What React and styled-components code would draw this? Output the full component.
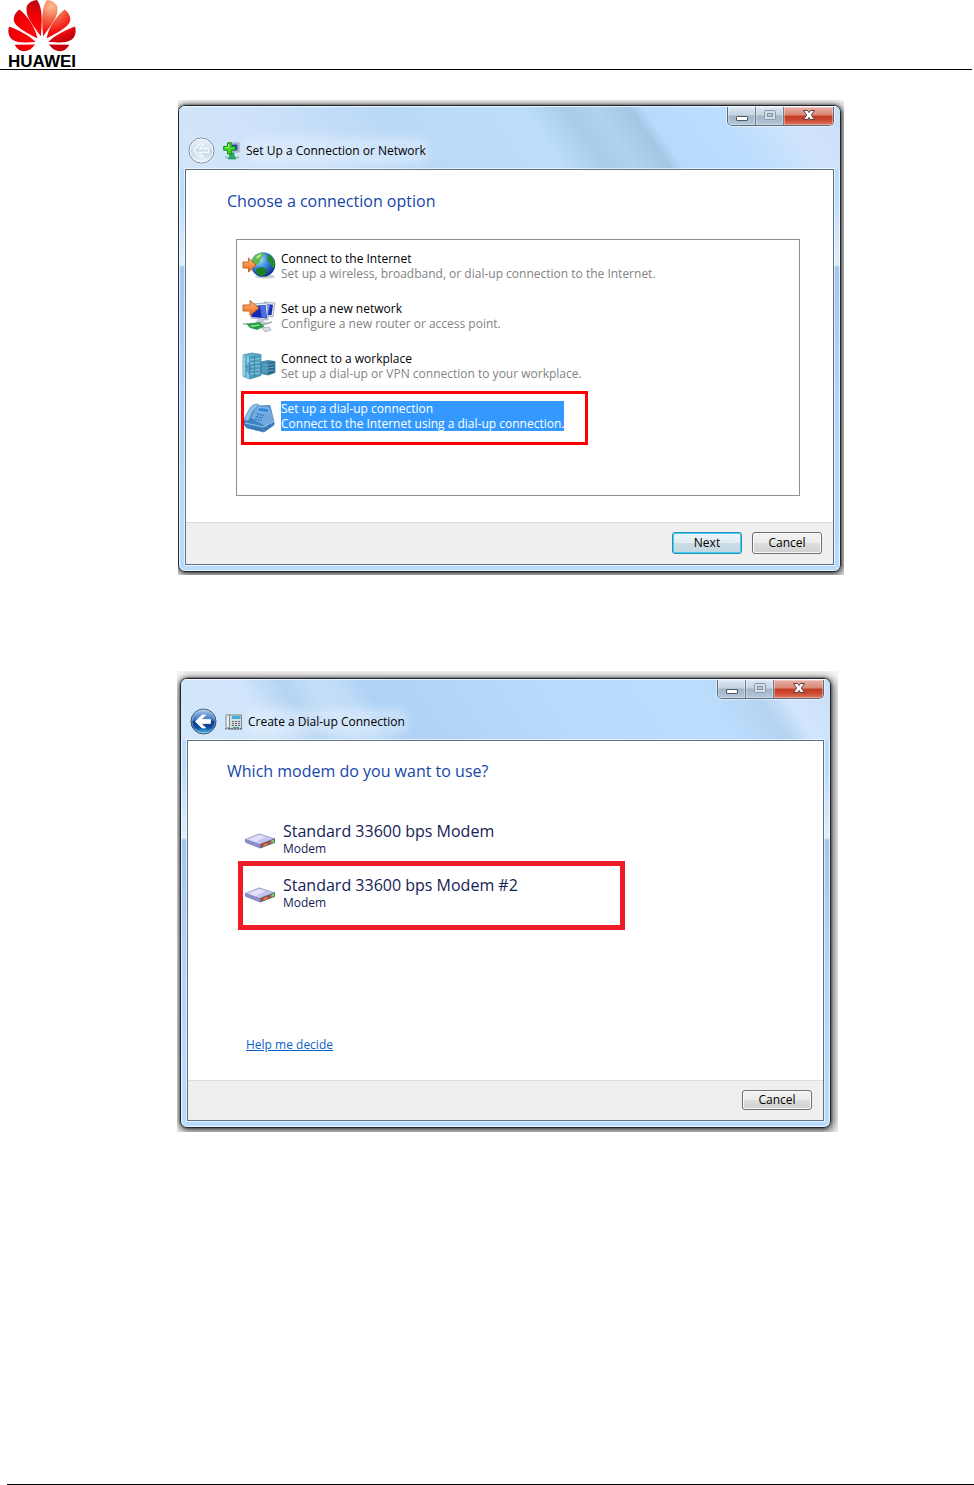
import React from 'react';
import styled, { createGlobalStyle, css } from 'styled-components';

const GlobalStyle = createGlobalStyle`
  * {
    box-sizing: border-box;
  }

  body {
    margin: 0;
    background: #fff;
    font-family: 'Open Sans', 'Noto Sans', sans-serif;
    font-size: 12px;
    color: #000;
  }

  button {
    font: inherit;
    color: inherit;
    padding: 0;
  }

  h1, h2, ul {
    margin: 0;
    padding: 0;
    font-weight: 400;
    list-style: none;
  }

  svg {
    display: block;
    flex: none;
  }
`

const Page = styled.div`
  min-height: 100vh;
  display: flex;
  flex-direction: column;
`

const PageHeader = styled.header`
  height: 70px;
  margin-right: 2px;
  padding-left: 8px;
  border-bottom: 1px solid #000;
`

const Brand = styled.div`
  width: 68px;
  font: bold 17px/16px 'Liberation Sans', sans-serif;
  text-align: center;

  span {
    display: block;
    padding-top: 2px;
  }
`

const Content = styled.main`
  flex: 1;
  display: flex;
  flex-direction: column;
  gap: 96px;
  padding: 30px 16px 40px 177px;
`

const PageFooter = styled.footer`
  margin-left: 7px;
  border-top: 1px solid #000;
`

// soft grey backdrop that the window shadow is clipped to
const Stage = styled.section`
  overflow: hidden;
  background: #f4f4f4;
  width: 100%;

  ${p => p.$kind === 'network' ? css`
    max-width: 666px;
    margin-left: 1px;
    padding: 5px 3px 3px 0;
  ` : css`
    max-width: 661px;
    padding: 7px 7px 4px 3px;
  `}
`

const Frame = styled.div`
  border: 1px solid #20262e;
  border-radius: 7px;
  overflow: hidden;
  background: linear-gradient(180deg, #c4def8 0, #bcdcfb 90px, #dfeefc 159px, #a3c8ec 161px, #b4d6f8 300px, #b9dcfd 100%);
  box-shadow: inset 0 0 0 1px rgba(255, 255, 255, .7), 0 0 3px rgba(0, 0, 0, .7), 1px 2px 8px 2px rgba(0, 0, 0, .6);
`

const glass = {
  network: 'linear-gradient(56deg, #d2e5fa 0, #cde2f9 16%, #bad9f7 34%, #bcddfc 55%, #a9ccea 61%, #b1d3f1 65%, #a4c7e6 70%, #b9dbfb 72%, #bddefe 83%, #d0e4fb 92%, #c8dff7 100%)',
  dialup: 'linear-gradient(56deg, #d4e7fb 0, #d0e5fb 14%, #b5d4f3 20%, #c4dff8 25%, #c0dcf7 28%, #afd2f5 32%, #b4d7f8 46%, #b9dcfc 60%, #bcdefe 80%, #b4d3f1 88%, #d2e6fd 92%, #c8dff6 100%)'
}

const TitleBar = styled.header`
  display: flex;
  align-items: flex-start;
  justify-content: space-between;
  height: ${p => p.$kind === 'network' ? 63 : 61}px;
  padding: 0 6px 0 9px;
  background: ${p => glass[p.$kind]};
  border-top: 1px solid rgba(255, 255, 255, .7);
`

const TitleGroup = styled.div`
  display: flex;
  align-items: center;
  padding-top: ${p => p.$kind === 'network' ? 30 : 28}px;

  h1 {
    margin-left: 6px;
    font-size: 12px;
    line-height: 20px;
    border-radius: 10px;
    background: rgba(240, 247, 255, .35);
    box-shadow: 0 0 8px 4px rgba(240, 247, 255, .35);
  }
`

const BackButton = styled.button`
  border: 0;
  background: none;
  border-radius: 50%;
  margin-right: 8px;
`

const Captions = styled.div`
  display: flex;
  border: 1px solid #5d6b7b;
  border-top: 0;
  border-radius: 0 0 5px 5px;
  overflow: hidden;
  box-shadow: 0 0 0 1px rgba(255, 255, 255, .5);
`

const CaptionButton = styled.button`
  display: flex;
  align-items: center;
  justify-content: center;
  width: ${p => p.$close ? 49 : 28}px;
  height: 18px;
  border: 0;
  border-right: ${p => p.$close ? 0 : '1px solid #6e7c8c'};
  background: ${p => p.$close
    ? 'linear-gradient(180deg, #e9b1a7 0, #d98573 45%, #c23a22 50%, #cf4a33 75%, #dc7a62 100%)'
    : 'linear-gradient(180deg, #dbe6f1 0, #c5d3e1 45%, #a2b4c8 50%, #b4c6d9 100%)'};
  box-shadow: inset 0 0 0 1px rgba(255, 255, 255, .35);
`

const Client = styled.div`
  margin: 0 6px 6px;
  border: 1px solid #5f7186;
  background: #fff;
  box-shadow: 0 0 0 1px rgba(255, 255, 255, .6);
`

const Body = styled.div`
  height: ${p => p.$kind === 'network' ? 352 : 339}px;
  padding: ${p => p.$kind === 'network' ? '19px 33px 0 41px' : '18px 33px 0 39px'};
`

const Heading = styled.h2`
  font-size: 16px;
  line-height: 24px;
  color: #1646a8;
`

const OptionList = styled.ul`
  height: 257px;
  margin: 26px 0 0 9px;
  padding: 1px 0 0 5px;
  border: 1px solid #8a919b;
`

const Option = styled.li`
  position: relative;
  height: 50px;
`

const OptionButton = styled.button`
  display: flex;
  align-items: center;
  gap: 5px;
  width: 100%;
  height: 100%;
  border: 0;
  background: none;
  text-align: left;
`

const OptionText = styled.span`
  display: block;
  line-height: 15px;
  color: ${p => p.$selected ? '#fff' : '#000'};
  background: ${p => p.$selected ? '#3399ff' : 'none'};

  small {
    display: block;
    font-size: 12px;
    color: ${p => p.$selected ? '#fff' : '#838383'};
  }
`

const Callout = styled.span`
  position: absolute;
  pointer-events: none;

  ${p => p.$kind === 'network' ? css`
    top: 0;
    left: -1px;
    width: 347px;
    height: 54px;
    border: 3px solid #fe0000;
  ` : css`
    top: -7px;
    left: -7px;
    width: 387px;
    height: 69px;
    border: 5px solid #ee1c25;
  `}
`

const ModemList = styled.ul`
  margin: 31px 0 0 18px;
`

const Modem = styled.li`
  position: relative;
  height: 54px;
`

const ModemButton = styled(OptionButton)`
  gap: 8px;
  color: #151c55;
`

const ModemText = styled.span`
  display: block;
  padding-bottom: 4px;
  font-size: 16px;
  line-height: 20px;

  small {
    display: block;
    font-size: 12px;
    line-height: 16px;
  }
`

const HelpLink = styled.a`
  display: inline-block;
  margin: 114px 0 0 19px;
  line-height: 18px;
  color: #0a5fc4;
`

const Actions = styled.footer`
  display: flex;
  justify-content: flex-end;
  gap: 10px;
  height: ${p => p.$kind === 'network' ? 42 : 40}px;
  padding: 9px 11px 0;
  background: #efefef;
  border-top: 1px solid #dcdcdc;
`

const PushButton = styled.button`
  width: 70px;
  height: ${p => p.$short ? 20 : 22}px;
  border: 1px solid ${p => p.$primary ? '#2c8fb5' : '#707070'};
  border-radius: 3px;
  line-height: 18px;
  background: ${p => p.$primary
    ? 'linear-gradient(180deg, #eef5f9 0, #e1edf3 48%, #cbdde6 52%, #c3d8e3 100%)'
    : 'linear-gradient(180deg, #f3f3f3 0, #ebebeb 48%, #dddddd 52%, #d0d0d0 100%)'};
  box-shadow: inset 0 0 0 1px ${p => p.$primary ? '#42cdf5' : '#fafafa'};
`

const Petals = () =>
  <g>
    <path d="M97 107C78 78 50 50 55 20C60 7 74 1 86 0C103 25 101 62 97 107Z" />
    <path d="M87 113C60 98 14 78 17 54C19 41 26 33 34 28C56 46 79 76 87 113Z" />
    <path d="M82 124C58 125 17 129 5 108C0 98 0 88 3 78C28 87 64 105 82 124Z" />
    <path d="M80 131L20 132C26 145 38 152 48 151C62 150 72 142 80 131Z" />
  </g>

const HuaweiMark = () =>
  <svg width="68" height="52" viewBox="0 0 201 153" aria-hidden="true">
    <defs>
      <radialGradient id="petalLeft" gradientUnits="userSpaceOnUse" cx="70" cy="95" r="95">
        <stop offset="0" stopColor="#ff0a0a" />
        <stop offset=".55" stopColor="#f00005" />
        <stop offset="1" stopColor="#b40a12" />
      </radialGradient>
      <radialGradient id="petalRight" gradientUnits="userSpaceOnUse" cx="73" cy="18" r="110">
        <stop offset="0" stopColor="#fbc193" />
        <stop offset=".35" stopColor="#f4664a" />
        <stop offset=".7" stopColor="#f5100f" />
        <stop offset="1" stopColor="#c8000a" />
      </radialGradient>
    </defs>
    <g fill="url(#petalLeft)"><Petals /></g>
    <g fill="url(#petalRight)" transform="translate(201) scale(-1 1)"><Petals /></g>
  </svg>

const BackIcon = ({ active }) =>
  <svg width="27" height="27" viewBox="0 0 27 27" aria-hidden="true">
    <defs>
      <linearGradient id={active ? 'orbOn' : 'orbOff'} x1="0" y1="0" x2="0" y2="1">
        <stop offset="0" stopColor={active ? '#a9c8ea' : '#e6f0fa'} />
        <stop offset=".45" stopColor={active ? '#3a74be' : '#d3e1ee'} />
        <stop offset=".5" stopColor={active ? '#0b3d8e' : '#c6d7e7'} />
        <stop offset=".75" stopColor={active ? '#10519f' : '#d4e3f1'} />
        <stop offset="1" stopColor={active ? '#4fd0f5' : '#f1f7fd'} />
      </linearGradient>
    </defs>
    <circle cx="13.5" cy="13.5" r="12.5" fill={`url(#${active ? 'orbOn' : 'orbOff'})`} stroke={active ? '#3c506e' : '#7d8b9a'} />
    <circle cx="13.5" cy="13.5" r="11.5" fill="none" stroke="#fff" strokeOpacity={active ? .35 : .8} />
    <path
      d="M5.5 13.5L12 7h3.6l-4.4 4.6h9.3v3.8h-9.3l4.4 4.6H12Z"
      fill={active ? '#fff' : '#cfdeec'}
      stroke={active ? '#fff' : '#f8fbfe'}
      strokeWidth={active ? .8 : 1.2}
      strokeLinejoin="round"
    />
  </svg>

const NetworkAddIcon = () =>
  <svg width="17" height="18" viewBox="0 0 17 18" aria-hidden="true">
    <path d="M7 1h9v9H8z" fill="#c6cddd" stroke="#808ba5" strokeWidth=".8" />
    <path d="M9 2.500h5.500v6H9z" fill="#2b3ea8" />
    <path d="M2 14.500h14v2H2z" fill="#9fb9c0" />
    <path d="M6 11h5v3l2 3H5l2-2z" fill="#1fae62" stroke="#14834a" strokeWidth=".6" />
    <path d="M4.500.8h3.800v3.600h3.900v3.800H8.300V12H4.500V8.200H.7V4.400h3.800z" fill="#42d829" stroke="#158a18" />
    <path d="M5.600 2v3.500H2" fill="none" stroke="#9df783" />
  </svg>

const PhoneTitleIcon = () =>
  <svg width="17" height="16" viewBox="0 0 17 16" aria-hidden="true">
    <rect x="4" y="1" width="12.500" height="14" fill="#d9dcdf" stroke="#777f88" />
    <rect x="1" y=".8" width="3.500" height="13" rx="1" fill="#eceeef" stroke="#6d747c" strokeWidth=".8" />
    <rect x="7" y="2" width="8.500" height="3" fill="#3db1dc" />
    <path d="M7 7.500h9M7 9.500h9M7 11.500h9" stroke="#5a626b" strokeDasharray="2 1" />
    <path d="M0 14.800h17" stroke="#4c555e" strokeDasharray="2 1" />
    <path d="M8 13.500h6" stroke="#38a5a0" />
  </svg>

const MinimizeIcon = () =>
  <svg width="14" height="14" viewBox="0 0 14 14" aria-hidden="true">
    <rect x="1.500" y="7.500" width="11" height="4" rx=".5" fill="#fff" stroke="#4d5766" />
  </svg>

const MaximizeIcon = () =>
  <svg width="14" height="14" viewBox="0 0 14 14" aria-hidden="true">
    <rect x="1.500" y="1.500" width="11" height="9" rx="1" fill="#d5dee8" stroke="#8c9baa" />
    <rect x="4.500" y="4.500" width="5" height="3" fill="#b9c7d5" stroke="#8796a6" />
  </svg>

const CloseIcon = () =>
  <svg width="14" height="14" viewBox="0 0 14 14" aria-hidden="true">
    <path d="M1.500 1.500h4L7 3.600l1.500-2.100h4L9.300 6l3.200 4.500h-4L7 8.400l-1.500 2.100h-4L4.700 6z" fill="#fff" stroke="#5b4148" strokeLinejoin="round" />
  </svg>

const GlobeIcon = () =>
  <svg width="34" height="34" viewBox="0 0 34 34" aria-hidden="true">
    <defs>
      <radialGradient id="sea" cx=".35" cy=".3" r=".75">
        <stop offset="0" stopColor="#b8e2fb" />
        <stop offset=".45" stopColor="#3d8cdf" />
        <stop offset="1" stopColor="#0c2c92" />
      </radialGradient>
      <linearGradient id="arrow" x1="0" y1="0" x2="0" y2="1">
        <stop offset="0" stopColor="#ffbd85" />
        <stop offset="1" stopColor="#f0640f" />
      </linearGradient>
    </defs>
    <ellipse cx="23" cy="27.500" rx="10" ry="2" fill="#c9ced3" />
    <circle cx="21" cy="15.500" r="12.300" fill="url(#sea)" />
    <path d="M12 8c2.500-3 6-4.500 9-4.600l1 2.600-3 3-1 4-3.500 3-2.500-.5-2 1.500c-.5-3 .3-6.500 2-9z" fill="#62bb45" />
    <path d="M26 5c4 2 6.500 5.500 7 9.500l-1 5-2.500-2-1.500-4-3-2.500z" fill="#238c2c" />
    <path d="M14 20l5-2 5.500 2 1 3-4 4.500c-3.500-.3-6.500-2.200-8-5z" fill="#1c7c28" />
    <path d="M14 8l4-3 1.500 1.500-4 3.500z" fill="#b6e795" />
    <path d="M1 13h5.500V9l7.500 7-7.500 7V19H1z" fill="url(#arrow)" stroke="#b95a1c" strokeWidth=".9" />
  </svg>

const NewNetworkIcon = () =>
  <svg width="34" height="34" viewBox="0 0 34 34" aria-hidden="true">
    <path d="M22 3l11 1-2 14-9-1z" fill="#e3e8f0" stroke="#8b98ad" strokeWidth=".7" />
    <path d="M24 5l7 .8-1.500 10.500-6-.6z" fill="#1730b4" />
    <path d="M25 5l3 .4-2 10-2-.2z" fill="#7492ea" />
    <path d="M9 5l16-1 1 17-17-2z" fill="#e8edf4" stroke="#8793ab" strokeWidth=".7" />
    <path d="M9.500 7l14-1 1.500 13.500-15.500-1.500z" fill="#1329b4" />
    <path d="M18 6.500l5.500-.5 1 13-5-.5z" fill="#4a6ee0" />
    <path d="M16 20l7 1-1 2 5 1-2 1.500-12-2z" fill="#c2cad5" />
    <path d="M1 25h5M20 26l10-3" fill="none" stroke="#9fb0ab" strokeWidth="1.600" />
    <path d="M5 25l13-1.500 4 4-7 3-7-2z" fill="#26a248" stroke="#128033" strokeWidth=".6" />
    <path d="M8 26.500l9-1 1 1-8 1.500z" fill="#8ae096" />
    <path d="M20 29l7-1 2 3-6 2z" fill="#d8dfe2" stroke="#8d989e" strokeWidth=".6" />
    <path d="M1 6h7V1.500l9 7.500-9 7.500V12H1z" fill="url(#arrow)" stroke="#b95a1c" strokeWidth=".9" />
  </svg>

const WorkplaceIcon = () =>
  <svg width="34" height="34" viewBox="0 0 34 34" aria-hidden="true">
    <path d="M1 6l9-2 9 1.500v21L8 30l-7-2.500z" fill="#62aeca" stroke="#427e9b" strokeWidth=".7" />
    <path d="M1 6l6 1.500V30l-6-2.500z" fill="#87cbe0" />
    <path d="M7 7.500l12-2v21L7 30z" fill="#4a9cc0" />
    <path d="M8 11l10-1.500M8 14.500l10-1.300M8 18l10-1M8 21.500l10-.9M8 25l10-1M1 10.500l6 1M1 15l6 1M1 19.500l6 1M1 24l6 1" stroke="#a3d8e8" strokeWidth=".8" />
    <path d="M12.500 7v22M4 7v21" stroke="#347c9c" strokeWidth=".8" />
    <path d="M3 18l4-5 3 6-3 7z" fill="#2878ac" fillOpacity=".5" />
    <path d="M19 13l7-1.500 7 1v11l-7 2.500-7-1.500z" fill="#4592b5" stroke="#356e8b" strokeWidth=".7" />
    <path d="M26 13.500l7-1v11L26 26z" fill="#286d94" />
    <path d="M20 16h5.500l7-1M20 19h5.500l7-1M20 22h5.500l7-1" fill="none" stroke="#74b2ca" strokeWidth=".8" />
  </svg>

const FaxIcon = () =>
  <svg width="34" height="34" viewBox="0 0 34 34" aria-hidden="true">
    <path d="M2 21l11-14 15-.5L32 23v3l-10 7-17-4-3-3z" fill="#3f80c0" stroke="#3a75b1" strokeWidth=".7" />
    <path d="M9 19l5-12 14 .5L32 23l-9 4z" fill="#6fa9de" />
    <path d="M2 20L8 9c1.500-2.500 6-5 9-3l-6 6-4 9c-1.500 1.500-4.500 1-5-1z" fill="#8fbfe8" stroke="#4f8ac2" strokeWidth=".8" />
    <path d="M16 8.500l10 1 1.500 4-11-1z" fill="#2f86de" stroke="#a9d0f2" strokeWidth=".6" />
    <path d="M15 15l7 1.500M14 17.500l7 1.500M13 20l7 1.500" stroke="#3476ba" strokeWidth="1.200" strokeDasharray="2 1" />
    <path d="M3 24l19 4 10-6" fill="none" stroke="#9cc6ea" />
    <path d="M10 28v2M13 28.500v2M16 29v2M19 30v2M24 28v2M27 26v2" stroke="#285f9c" />
  </svg>

const ModemIcon = () =>
  <svg width="30" height="16" viewBox="0 0 30 16" aria-hidden="true">
    <path d="M1 8v2l14 5.500L30 9V7" fill="#c3c6cd" />
    <path d="M0 6.500L14 .8l16 5L15.500 12z" fill="#c3c5f0" stroke="#8c90b0" strokeWidth=".6" />
    <path d="M4 6.300L14 2l6 2-9 5z" fill="#e2e3fb" />
    <path d="M0 6.500L15.500 12v3L0 9z" fill="#8f90d4" stroke="#6b6fa8" strokeWidth=".5" />
    <path d="M15.500 11L30 5.500v4L15.500 15z" fill="#6e7078" stroke="#555962" strokeWidth=".5" />
    <path d="M16.500 11.500l9-3.500v2l-9 4z" fill="#c8382a" />
    <path d="M18.500 11.800l4-1.700v1.200l-4 1.800z" fill="#f4a33a" />
    <path d="M26.500 7.500l2.500-1V9l-2.500 1z" fill="#7be05a" />
  </svg>

const options = [
  { title: 'Connect to the Internet', text: 'Set up a wireless, broadband, or dial-up connection to the Internet.', Icon: GlobeIcon },
  { title: 'Set up a new network', text: 'Configure a new router or access point.', Icon: NewNetworkIcon },
  { title: 'Connect to a workplace', text: 'Set up a dial-up or VPN connection to your workplace.', Icon: WorkplaceIcon },
  { title: 'Set up a dial-up connection', text: 'Connect to the Internet using a dial-up connection.', Icon: FaxIcon, selected: true }
]

const modems = [
  { title: 'Standard 33600 bps Modem' },
  { title: 'Standard 33600 bps Modem #2', marked: true }
]

const Window = ({ kind, title, icon, canGoBack, children, actions }) =>
  <Stage $kind={kind}>
    <Frame>
      <TitleBar $kind={kind}>
        <TitleGroup $kind={kind}>
          <BackButton type="button" aria-label="Back" disabled={!canGoBack}>
            <BackIcon active={canGoBack} />
          </BackButton>
          {icon}
          <h1>{title}</h1>
        </TitleGroup>
        <Captions>
          <CaptionButton type="button" aria-label="Minimize"><MinimizeIcon /></CaptionButton>
          <CaptionButton type="button" aria-label="Maximize" disabled><MaximizeIcon /></CaptionButton>
          <CaptionButton type="button" aria-label="Close" $close><CloseIcon /></CaptionButton>
        </Captions>
      </TitleBar>
      <Client>
        <Body $kind={kind}>{children}</Body>
        <Actions $kind={kind}>{actions}</Actions>
      </Client>
    </Frame>
  </Stage>

export default function App() {
  return (
    <Page>
      <GlobalStyle />
      <PageHeader>
        <Brand>
          <HuaweiMark />
          <span>HUAWEI</span>
        </Brand>
      </PageHeader>
      <Content>
        <Window
          kind="network"
          title="Set Up a Connection or Network"
          icon={<NetworkAddIcon />}
          actions={<>
            <PushButton type="button" $primary>Next</PushButton>
            <PushButton type="button">Cancel</PushButton>
          </>}
        >
          <Heading>Choose a connection option</Heading>
          <OptionList>
            {options.map(({ title, text, Icon, selected }) =>
              <Option key={title}>
                <OptionButton type="button" aria-pressed={!!selected}>
                  <Icon />
                  <OptionText $selected={selected}>
                    {title}
                    <small>{text}</small>
                  </OptionText>
                </OptionButton>
                {selected && <Callout $kind="network" />}
              </Option>
            )}
          </OptionList>
        </Window>
        <Window
          kind="dialup"
          title="Create a Dial-up Connection"
          icon={<PhoneTitleIcon />}
          canGoBack
          actions={<PushButton type="button" $short>Cancel</PushButton>}
        >
          <Heading>Which modem do you want to use?</Heading>
          <ModemList>
            {modems.map(({ title, marked }) =>
              <Modem key={title}>
                <ModemButton type="button">
                  <ModemIcon />
                  <ModemText>
                    {title}
                    <small>Modem</small>
                  </ModemText>
                </ModemButton>
                {marked && <Callout $kind="dialup" />}
              </Modem>
            )}
          </ModemList>
          <HelpLink href="#help">Help me decide</HelpLink>
        </Window>
      </Content>
      <PageFooter />
    </Page>
  )
}
